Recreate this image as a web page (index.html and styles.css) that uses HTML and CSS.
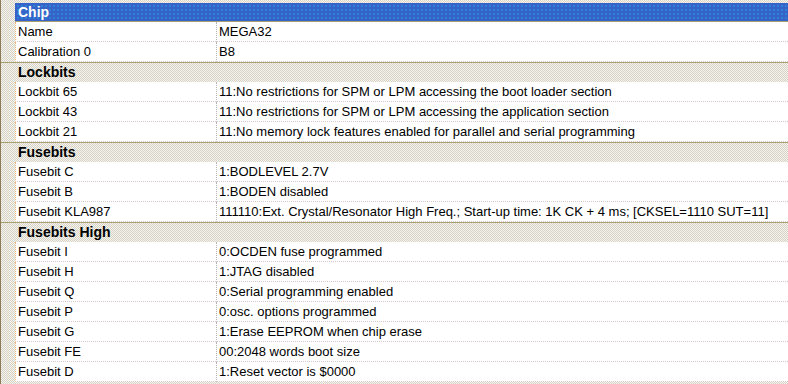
FILE: index.html
```html
<!DOCTYPE html>
<html lang="en">

<head>
  <meta charset="UTF-8">
  <title>Chip properties</title>
  <link rel="stylesheet" href="styles.css">
</head>

<body>
  <div class="grid">
    <div class="row head">
      <div class="gutter"></div>
      <div class="title">Chip</div>
    </div>
    <div class="row">
      <div class="gutter"></div>
      <div class="name">Name</div>
      <div class="value">MEGA32</div>
    </div>
    <div class="row">
      <div class="gutter"></div>
      <div class="name">Calibration 0</div>
      <div class="value">B8</div>
    </div>

    <div class="row group">Lockbits</div>
    <div class="row">
      <div class="gutter"></div>
      <div class="name">Lockbit 65</div>
      <div class="value">11:No restrictions for SPM or LPM accessing the boot loader section</div>
    </div>
    <div class="row">
      <div class="gutter"></div>
      <div class="name">Lockbit 43</div>
      <div class="value">11:No restrictions for SPM or LPM accessing the application section</div>
    </div>
    <div class="row">
      <div class="gutter"></div>
      <div class="name">Lockbit 21</div>
      <div class="value">11:No memory lock features enabled for parallel and serial programming</div>
    </div>

    <div class="row group">Fusebits</div>
    <div class="row">
      <div class="gutter"></div>
      <div class="name">Fusebit C</div>
      <div class="value">1:BODLEVEL 2.7V</div>
    </div>
    <div class="row">
      <div class="gutter"></div>
      <div class="name">Fusebit B</div>
      <div class="value">1:BODEN disabled</div>
    </div>
    <div class="row">
      <div class="gutter"></div>
      <div class="name">Fusebit KLA987</div>
      <div class="value">111110:Ext. Crystal/Resonator High Freq.; Start-up time: 1K CK + 4 ms; [CKSEL=1110 SUT=11]</div>
    </div>

    <div class="row group">Fusebits High</div>
    <div class="row">
      <div class="gutter"></div>
      <div class="name">Fusebit I</div>
      <div class="value">0:OCDEN fuse programmed</div>
    </div>
    <div class="row">
      <div class="gutter"></div>
      <div class="name">Fusebit H</div>
      <div class="value">1:JTAG disabled</div>
    </div>
    <div class="row">
      <div class="gutter"></div>
      <div class="name">Fusebit Q</div>
      <div class="value">0:Serial programming enabled</div>
    </div>
    <div class="row">
      <div class="gutter"></div>
      <div class="name">Fusebit P</div>
      <div class="value">0:osc. options programmed</div>
    </div>
    <div class="row">
      <div class="gutter"></div>
      <div class="name">Fusebit G</div>
      <div class="value">1:Erase EEPROM when chip erase</div>
    </div>
    <div class="row">
      <div class="gutter"></div>
      <div class="name">Fusebit FE</div>
      <div class="value">00:2048 words boot size</div>
    </div>
    <div class="row">
      <div class="gutter"></div>
      <div class="name">Fusebit D</div>
      <div class="value">1:Reset vector is $0000</div>
    </div>
  </div>
</body>

</html>
```

FILE: styles.css
```css
body {
  margin: 0;
  background-color: #fff;
  color: #000;
  font-family: 'Liberation Sans', Arial, sans-serif;
  font-size: 13px;
}

.grid {
  width: 788px;
  height: 384px;
  padding-top: 2px;
  box-sizing: border-box;
  border-left: 1px solid #8c7c58;
  background: repeating-conic-gradient(#d6d2c6 0 25%, #f6f4ee 0 50%) 0 0 / 2px 2px;
}

.row {
  display: grid;
  grid-template-columns: 14px 201px 1fr;
  height: 20px;
}

.gutter {
  background: repeating-conic-gradient(#d6d2c6 0 25%, #f6f4ee 0 50%) 0 0 / 2px 2px;
}

.name,
.value {
  background-color: #fff;
  line-height: 19px;
  white-space: nowrap;
  overflow: hidden;
  border-bottom: 1px dotted #d8c8cc;
}

.name {
  padding-left: 2px;
  border-left: 1px dotted #f0b478;
}

.value {
  padding-left: 2px;
  border-left: 1px dotted #b4b4b4;
}

/* blue category header */
.title {
  grid-column: 2 / 4;
  margin-top: 1px;
  height: 18px;
  line-height: 18px;
  padding-left: 3px;
  color: #fff;
  font-weight: bold;
  font-size: 14px;
  border-bottom: 1px solid #a8a070;
  background: radial-gradient(circle, #28a8d8 0 0.6px, transparent 0.8px) 1px 1px / 4px 4px,
    #3563c9;
}

/* grey section rows */
.group {
  display: block;
  box-sizing: border-box;
  border-top: 1px solid #a8a070;
  padding-left: 17px;
  line-height: 19px;
  font-weight: bold;
  font-size: 14px;
}
```
